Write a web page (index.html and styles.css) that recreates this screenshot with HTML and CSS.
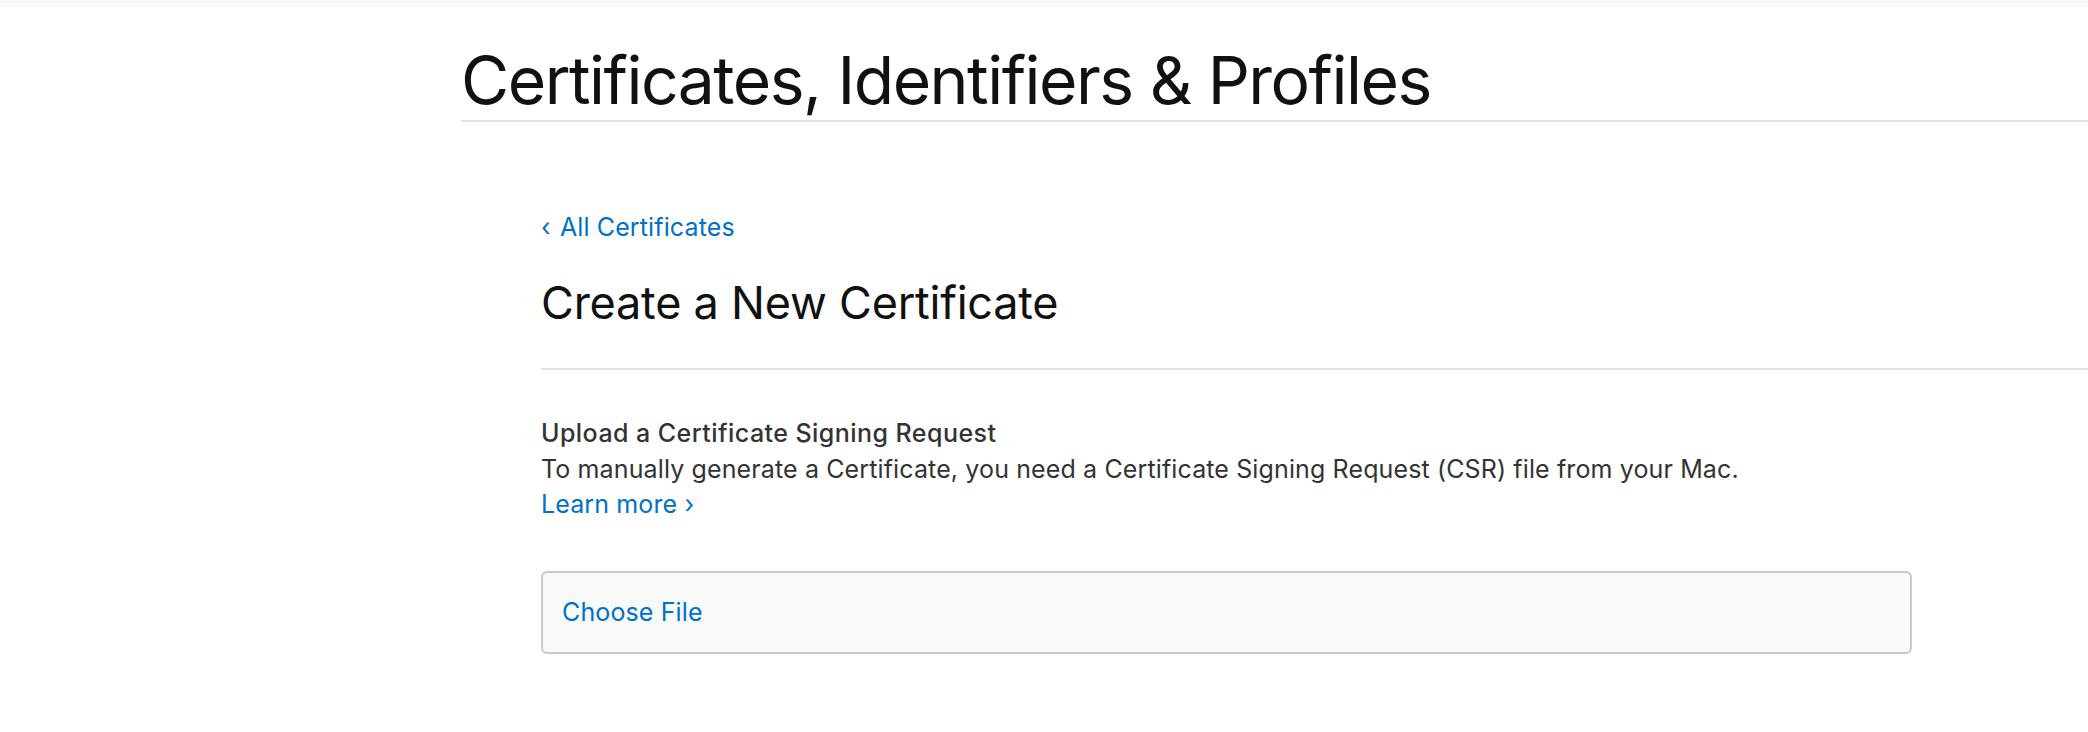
FILE: index.html
```html
<!DOCTYPE html>
<html lang="en">
<head>
<meta charset="utf-8">
<title>Certificates, Identifiers &amp; Profiles</title>
<link rel="stylesheet" href="styles.css">
</head>
<body>
<div class="topbar"></div>
<main class="main">
  <h1 class="page-title">Certificates, Identifiers &amp; Profiles</h1>
  <div class="content">
    <a class="back-link" href="#"><span class="chev">‹</span> All Certificates</a>
    <h2 class="section-title">Create a New Certificate</h2>
    <div class="divider"></div>
    <section class="upload">
      <h3 class="upload-title">Upload a Certificate Signing Request</h3>
      <p class="upload-text">To manually generate a Certificate, you need a Certificate Signing Request (CSR) file from your Mac.</p>
      <a class="learn-more" href="#">Learn more ›</a>
      <div class="file-box">
        <a class="choose-file" href="#">Choose File</a>
      </div>
    </section>
  </div>
</main>
</body>
</html>
```
FILE: styles.css
```css
* { box-sizing: border-box; }
html, body { margin: 0; padding: 0; background: #fff; }
body {
  font-family: Inter, "Liberation Sans", sans-serif;
  color: #333;
  overflow: hidden;
}
.topbar { height: 7px; background: #f9f9f9; }
.main { margin-left: 461px; }
.page-title {
  margin: 34px 0 0 0;
  font-size: 66px;
  line-height: 79px;
  font-weight: 400;
  color: #111;
  letter-spacing: -0.023em;
  border-bottom: 2px solid #e2e2e2;
}
.content { padding-left: 80px; }
.back-link {
  display: block;
  margin-top: 88px;
  font-size: 25px;
  line-height: 35px;
  color: #0070c9;
  text-decoration: none;
  letter-spacing: 0.005em;
}
.chev { margin-right: 2px; }
.section-title {
  margin: 33px 0 0 0;
  font-size: 45px;
  line-height: 50px;
  font-weight: 400;
  color: #111;
  letter-spacing: -0.005em;
}
.divider { margin-top: 40px; height: 2px; background: #e2e2e2; }
.upload { padding-top: 46px; }
.upload-title {
  margin: 0;
  font-size: 25px;
  line-height: 35px;
  font-weight: 500;
  color: #333;
  letter-spacing: 0.018em;
}
.upload-text {
  margin: 0;
  font-size: 25px;
  line-height: 36px;
  letter-spacing: 0.005em;
}
.learn-more {
  display: block;
  font-size: 25px;
  line-height: 35px;
  color: #0070c9;
  text-decoration: none;
  letter-spacing: 0.005em;
}
.file-box {
  margin-top: 49px;
  width: 1371px;
  border: 2px solid #c9c9c9;
  border-radius: 6px;
  background: #f8f9f9;
  padding: 22px 19px 22px;
}
.choose-file {
  display: block;
  font-size: 25px;
  line-height: 35px;
  color: #0070c9;
  text-decoration: none;
  letter-spacing: 0.005em;
}
```
